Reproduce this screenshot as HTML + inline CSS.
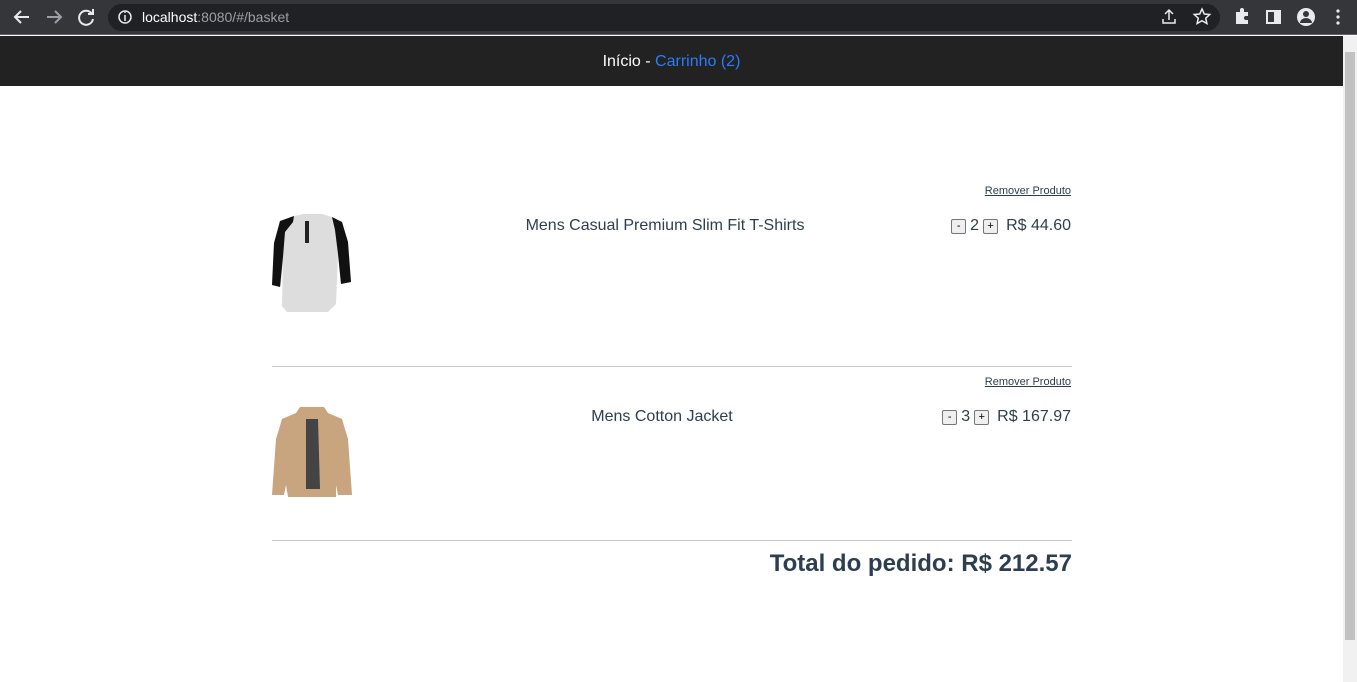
<!DOCTYPE html>
<html><head><meta charset="utf-8"><style>
*{margin:0;padding:0;box-sizing:border-box}
body{width:1357px;height:682px;overflow:hidden;background:#fff;font-family:"Liberation Sans",Arial,sans-serif;color:#2c3e50;position:relative}
.abs{position:absolute}
.chrome{left:0;top:0;width:1357px;height:35px;background:#35363a;border-bottom:1px solid #5f6368}
.url{left:108px;top:4px;width:1112px;height:27px;border-radius:14px;background:#202124}
.nav{left:0;top:36px;width:1343px;height:50px;background:#222;color:#fff;font-size:16px;text-align:center;line-height:50px;padding-top:1px}
.nav a{color:#2b7cf7;text-decoration:none}
.sb{left:1343px;top:36px;width:14px;height:646px;background:#f1f1f1}
.thumb{left:1345px;top:52px;width:10px;height:588px;background:#c1c1c1}
.rm{font-size:11px;text-decoration:underline;color:#2c3e50;right:286px}
.name{font-size:16px;text-align:center;width:400px}
.price{font-size:16px;right:286px;display:flex;align-items:center;gap:4px}
.btn{display:inline-block;width:15px;height:15px;border:1px solid #767676;border-radius:2px;background:#efefef;font-size:11px;line-height:12px;text-align:center;color:#000}
.hr{left:272px;width:800px;height:1px;background:#ccc}
</style></head><body>
<div class="abs chrome"></div>
<div class="abs url"></div>
<svg class="abs" style="left:0;top:0" width="1357" height="35">
<g stroke="#e8eaed" stroke-width="2" fill="none">
<path d="M29 17H15M21 11l-6 6 6 6"/>
<path d="M47 17h14M55 11l6 6-6 6" stroke="#9aa0a6"/>
<path d="M92 14a7 7 0 1 0 1 5M93 9v5h-5"/>
<circle cx="125" cy="17" r="6" stroke-width="1.5"/>
<path d="M125 15v6M125 12v1" stroke-width="1.5"/>
<path d="M1202 9l2.3 5 5.4.5-4 3.7 1.2 5.3-4.9-2.8-4.9 2.8 1.2-5.3-4-3.7 5.4-.5z" stroke-width="1.5"/>
<rect x="1267" y="11" width="13" height="12" stroke-width="2"/>
</g>
<path d="M1236 12h4v-2a2 2 0 0 1 4 0v2h4v4h-2a2 2 0 0 0 0 4h2v4h-12z" fill="#e8eaed"/>
<rect x="1274" y="11" width="6" height="12" fill="#e8eaed"/>
<circle cx="1306" cy="17" r="9" fill="#e8eaed"/><circle cx="1306" cy="14" r="3" fill="#35363a"/><path d="M1300 23a6 5 0 0 1 12 0z" fill="#35363a"/>
<g fill="#e8eaed"><circle cx="1338" cy="11" r="1.6"/><circle cx="1338" cy="17" r="1.6"/><circle cx="1338" cy="23" r="1.6"/></g>
<path d="M1163 19v4h12v-4M1169 20v-9M1165 14l4-4 4 4" stroke="#e8eaed" stroke-width="1.5" fill="none"/>
<text x="142" y="22" font-family="Liberation Sans" font-size="14" fill="#fff">localhost<tspan fill="#9aa0a6">:8080/#/basket</tspan></text>
</svg>
<div class="abs nav">Início - <a>Carrinho (2)</a></div>
<div class="abs sb"></div><div class="abs thumb"></div>

<div class="abs rm" style="top:185px">Remover Produto</div>
<svg class="abs" style="left:272px;top:213px" width="80" height="110">
<path d="M22 3l10-2h18l10 3 10 5 6 20 3 40-10 2-3-30-2 50-8 8H15l-5-6 1-50-2 30L0 72 2 30 8 8z" fill="#ddd"/>
<path d="M22 3L8 8 2 30 0 72l8 2 3-30 2-25 8-10zM60 4l10 5 6 20 3 40-10 2-3-30-3-24z" fill="#111"/>
<rect x="33" y="8" width="4" height="22" fill="#222"/>
</svg>
<div class="abs name" style="left:465px;top:217px">Mens Casual Premium Slim Fit T-Shirts</div>
<div class="abs price" style="top:217px"><span class="btn">-</span>2<span class="btn">+</span><span style="margin-left:4px">R$ 44.60</span></div>
<div class="abs hr" style="top:366px"></div>

<div class="abs rm" style="top:376px">Remover Produto</div>
<svg class="abs" style="left:272px;top:405px" width="80" height="92">
<path d="M28 2h24l4 6 14 6 6 20 4 56H66l-2-10v12H16l-2-12-2 10H0L4 34l6-20 14-6z" fill="#c9a57f"/>
<path d="M34 14h12l2 70H34z" fill="#444"/>
</svg>
<div class="abs name" style="left:462px;top:408px">Mens Cotton Jacket</div>
<div class="abs price" style="top:408px"><span class="btn">-</span>3<span class="btn">+</span><span style="margin-left:4px">R$ 167.97</span></div>
<div class="abs hr" style="top:540px"></div>
<div class="abs" style="right:285px;top:550px;font-size:24px;font-weight:bold">Total do pedido: R$ 212.57</div>
</body></html>
